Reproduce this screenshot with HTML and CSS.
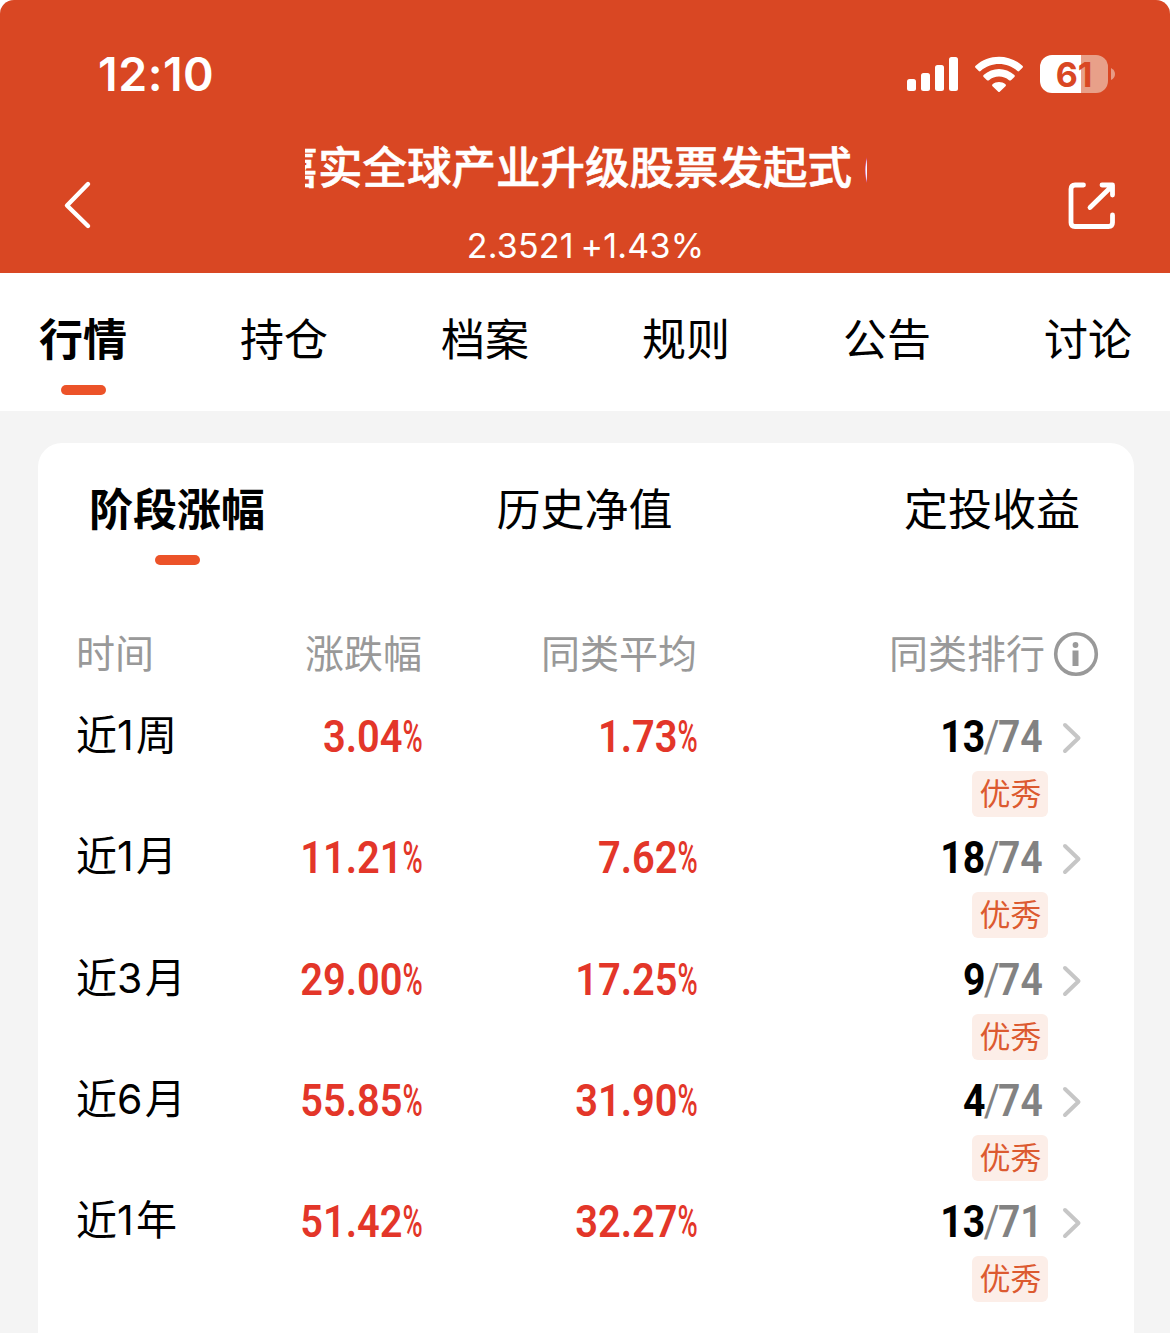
FILE: index.html
```html
<!DOCTYPE html>
<html lang="zh-CN">

<head>
    <meta charset="UTF-8">
    <meta name="viewport" content="width=device-width, initial-scale=1.0">
    <title>基金详情</title>
    <link rel="stylesheet" href="styles.css">
</head>

<body>
    <div class="header">
        <!-- 状态栏 -->
        <div class="status">
            <span class="time">12:10</span>
            <svg class="signal" width="52" height="36" viewBox="0 0 52 36" fill="#fff">
                <rect x="0" y="23" width="9" height="12" rx="2.5" />
                <rect x="14" y="17" width="9" height="18" rx="2.5" />
                <rect x="28" y="9" width="9" height="26" rx="2.5" />
                <rect x="42" y="1" width="9" height="34" rx="2.5" />
            </svg>
            <svg class="wifi" width="50" height="37" viewBox="0 0 50 37" fill="#fff">
                <path d="M1.6 9.700C14.5-2.400 35.500-2.400 48.400 9.700Q49.500 10.700 48.500 11.700L45.200 15Q44.300 15.800 43.400 15C33 5.700 17 5.700 6.600 15Q5.700 15.800 4.800 15L1.500 11.700Q0.500 10.700 1.600 9.700Z" />
                <path d="M9.600 18.900C18.500 10.900 31.500 10.900 40.400 18.900Q41.400 19.900 40.400 20.900L37 24.200Q36 25 35 24.200C29.500 19.200 20.500 19.200 15 24.200Q14 25 13 24.200L9.600 20.900Q8.600 19.900 9.600 18.900Z" />
                <path d="M18.500 28.200C22.200 25.100 27.800 25.100 31.500 28.200Q32.500 29.200 31.500 30.200L26 35.500Q25 36.500 24 35.500L18.500 30.200Q17.500 29.200 18.500 28.200Z" />
            </svg>
            <div class="battery"><span>61</span></div>
            <svg class="battery-cap" width="4" height="12" viewBox="0 0 4 12">
                <path d="M0 0Q4 2 4 6T0 12Z" fill="#e89a84" />
            </svg>
        </div>
        <!-- 标题 -->
        <div class="nav">
            <svg class="back" width="30" height="52" viewBox="0 0 30 52" fill="none" stroke="#fff" stroke-width="4.400" stroke-linecap="round" stroke-linejoin="round">
                <path d="M25 5L4 26.500L25 47" />
            </svg>
            <div class="title">
                <div class="name"><span>嘉实全球产业升级股票发起式 (QDII)</span></div>
                <div class="value">2.3521 +1.43%</div>
            </div>
            <svg class="share" width="48" height="48" viewBox="0 0 48 48" fill="none" stroke="#fff" stroke-width="4.800" stroke-linecap="round" stroke-linejoin="round">
                <path d="M15.500 3H7Q3 3 3 7V40.500Q3 44.500 7 44.500H40.500Q44.500 44.500 44.500 40.500V33" />
                <path d="M22 25.500L43 5M34 3H44.500V13" />
            </svg>
        </div>
    </div>

    <ul class="tabs">
        <li class="active">行情</li>
        <li>持仓</li>
        <li>档案</li>
        <li>规则</li>
        <li>公告</li>
        <li>讨论</li>
    </ul>

    <div class="card">
        <ul class="sub-tabs">
            <li class="active">阶段涨幅</li>
            <li>历史净值</li>
            <li>定投收益</li>
        </ul>
        <div class="row head">
            <div>时间</div>
            <div>涨跌幅</div>
            <div>同类平均</div>
            <div class="last">同类排行
                <svg width="46" height="46" viewBox="0 0 46 46">
                    <circle cx="23" cy="23" r="20.300" fill="none" stroke="#999" stroke-width="3.600" />
                    <circle cx="22.500" cy="14" r="2.900" fill="#999" />
                    <rect x="19.500" y="19.500" width="6" height="15.500" fill="#999" />
                </svg>
            </div>
        </div>
        <div class="row">
            <div class="label">近<i>1</i>周</div>
            <div class="num">3.04<b>%</b></div>
            <div class="num">1.73<b>%</b></div>
            <div class="rank"><span><em>13</em><u>/</u>74</span><svg class="arrow" width="20" height="32" viewBox="0 0 20 32"><path d="M3 3L16.500 16L3 29" /></svg></div>
            <span class="tag">优秀</span>
        </div>
        <div class="row">
            <div class="label">近<i>1</i>月</div>
            <div class="num">11.21<b>%</b></div>
            <div class="num">7.62<b>%</b></div>
            <div class="rank"><span><em>18</em><u>/</u>74</span><svg class="arrow" width="20" height="32" viewBox="0 0 20 32"><path d="M3 3L16.500 16L3 29" /></svg></div>
            <span class="tag">优秀</span>
        </div>
        <div class="row">
            <div class="label">近<i>3</i>月</div>
            <div class="num">29.00<b>%</b></div>
            <div class="num">17.25<b>%</b></div>
            <div class="rank"><span><em>9</em><u>/</u>74</span><svg class="arrow" width="20" height="32" viewBox="0 0 20 32"><path d="M3 3L16.500 16L3 29" /></svg></div>
            <span class="tag">优秀</span>
        </div>
        <div class="row">
            <div class="label">近<i>6</i>月</div>
            <div class="num">55.85<b>%</b></div>
            <div class="num">31.90<b>%</b></div>
            <div class="rank"><span><em>4</em><u>/</u>74</span><svg class="arrow" width="20" height="32" viewBox="0 0 20 32"><path d="M3 3L16.500 16L3 29" /></svg></div>
            <span class="tag">优秀</span>
        </div>
        <div class="row">
            <div class="label">近<i>1</i>年</div>
            <div class="num">51.42<b>%</b></div>
            <div class="num">32.27<b>%</b></div>
            <div class="rank"><span><em>13</em><u>/</u>71</span><svg class="arrow" width="20" height="32" viewBox="0 0 20 32"><path d="M3 3L16.500 16L3 29" /></svg></div>
            <span class="tag">优秀</span>
        </div>
    </div>
</body>

</html>
```
FILE: styles.css
```css
* {
    margin: 0;
    padding: 0;
    box-sizing: border-box;
}

html {
    background-color: #fff;
}

body {
    height: 1333px;
    overflow: hidden;
    background-color: #f4f4f4;
    border-radius: 14px 14px 0 0;
    color: #000;
    font-family: Inter, "Noto Sans CJK SC", sans-serif;
}

ul {
    list-style: none;
}

svg {
    display: block;
    flex: none;
}

.header {
    height: 273px;
    background-color: #d94723;
    color: #fff;
}

.status {
    display: flex;
    align-items: center;
    height: 148px;
    padding: 0 55px 0 98px;
}

.time {
    margin-right: auto;
    font-size: 46.5px;
    font-weight: 600;
    letter-spacing: 0.5px;
}

.wifi {
    margin: 0 16px 0 15px;
}

.battery {
    width: 68px;
    height: 38px;
    margin-right: 3px;
    border-radius: 12px;
    background: linear-gradient(to right, #fff 41px, #e8a089 41px);
    color: #d94723;
    font-size: 34px;
    font-weight: 700;
    line-height: 39px;
    text-align: center;
}

.nav {
    display: flex;
    height: 125px;
    padding: 0 54px 0 63px;
    justify-content: space-between;
}

.back {
    margin-top: 31px;
}

.share {
    margin-top: 34px;
}

.title {
    width: 562px;
    margin-left: 10px;
    text-align: center;
}

/* 名称超长时滚动，两端被裁切 */
.name {
    display: flex;
    height: 66px;
    margin-top: -15px;
    overflow: hidden;
    font-family: "Noto Sans CJK SC", sans-serif;
    font-size: 44.5px;
    font-weight: 500;
    line-height: 64px;
    white-space: nowrap;
    -webkit-text-stroke: 0.6px #fff;
}

.name span {
    margin-left: -31px;
}

.value {
    margin-top: 24px;
    font-size: 34px;
    line-height: 46px;
    letter-spacing: 0.2px;
    word-spacing: -3px;
}

.tabs,
.sub-tabs {
    display: flex;
    justify-content: space-between;
    font-size: 44px;
    line-height: 64px;
}

.tabs {
    height: 138px;
    padding: 35px 38px 0 39px;
    background-color: #fff;
}

.active {
    font-weight: 700;
}

.active::after {
    content: "";
    display: block;
    width: 45px;
    height: 10px;
    margin: 13px auto 0;
    border-radius: 5px;
    background-color: #ec5329;
}

.card {
    height: 900px;
    margin: 32px 36px 0 38px;
    padding: 35px 34px 0 38px;
    border-radius: 24px 24px 0 0;
    background-color: #fff;
}

.sub-tabs {
    height: 145px;
    padding: 0 20px 0 13px;
}

.row {
    display: grid;
    grid-template-columns: 160px 186px 275px 346px;
    grid-template-rows: 66px 46px;
    height: 121.3px;
    text-align: right;
}

.row > :first-child {
    text-align: left;
}

.head {
    height: 82px;
    color: #999;
    font-size: 39px;
    line-height: 62px;
}

.last {
    display: flex;
    align-items: center;
    justify-content: flex-end;
    gap: 8px;
    width: 402px;
    height: 62px;
}

.label {
    font-size: 41px;
    line-height: 60px;
}

.label i {
    font-style: normal;
    letter-spacing: 2.4px;
}

.num,
.rank {
    font-family: Roboto, sans-serif;
    font-size: 45px;
    font-weight: 600;
    line-height: 64px;
}

.num {
    padding-left: 20px;
    color: #e33629;
    transform: scaleX(0.885);
    transform-origin: right;
}

.num b {
    display: inline-block;
    width: 22px;
    font-weight: 500;
    transform: scaleX(0.69);
    transform-origin: left;
}

.rank {
    display: flex;
    width: 385px;
    justify-content: flex-end;
    align-items: center;
    color: #828282;
}

.rank span {
    margin-top: -2px;
    transform: scaleX(0.87);
    transform-origin: right;
}

.rank em {
    color: #000;
    font-style: normal;
    font-weight: 700;
}

.rank u {
    margin: 0 -2px;
    font-weight: 400;
    text-decoration: none;
}

.arrow {
    margin-left: 19px;
    fill: none;
    stroke: #c6c6c6;
    stroke-width: 4;
    stroke-linecap: round;
    stroke-linejoin: round;
}

.tag {
    grid-column: 4;
    grid-row: 2;
    justify-self: end;
    width: 76px;
    height: 46px;
    margin-right: -5px;
    padding-left: 1px;
    border-radius: 6px;
    background-color: #fceee8;
    color: #dc5a30;
    font-size: 31px;
    line-height: 45px;
    text-align: center;
}
```
